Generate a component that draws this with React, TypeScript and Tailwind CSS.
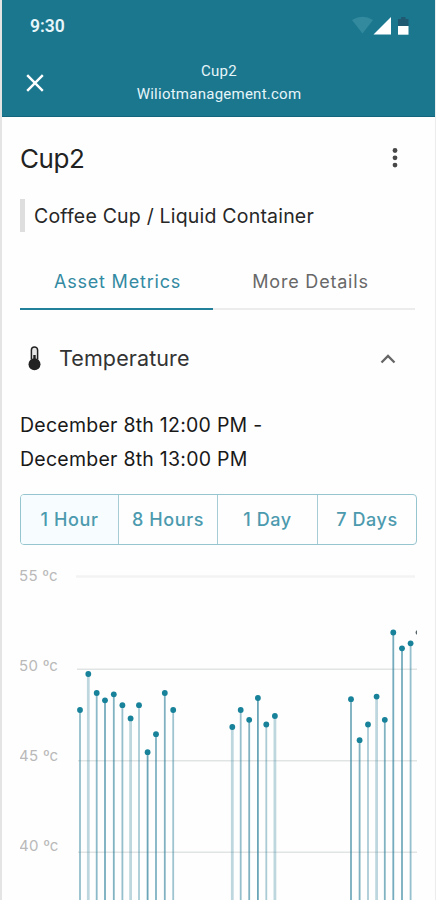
import React from "react";

const points: [number, number, number][] = [
  [80, 710, 0.5], [88.3, 674, 0.3], [96.7, 693, 0.55], [105, 700.3, 0.65], [113.8, 694.3, 0.6],
  [122.4, 705.2, 0.5], [130.6, 718.4, 0.3], [139, 705.2, 0.4], [147.6, 752.2, 0.7], [156, 734.2, 0.6],
  [164.8, 693, 0.6], [173.2, 710, 0.45],
  [232.3, 727, 0.3], [240.7, 710, 0.5], [249.2, 719.8, 0.6], [257.9, 698, 0.7], [266.3, 724.5, 0.4], [274.9, 716, 0.3],
  [351, 699.2, 0.65], [359.6, 740.2, 0.6], [368, 724.5, 0.4], [376.6, 696.6, 0.3], [384.8, 719.8, 0.6],
  [393.3, 632.5, 0.65], [402, 648.3, 0.65], [410.6, 643.3, 0.5],
];
const ranges = ["1 Hour", "8 Hours", "1 Day", "7 Days"];
const degrees = [55, 50, 45, 40];

function StatusIcons() {
  return (
    <svg className="mt-px h-[20px] w-[58px]" viewBox="352 17 58 20">
      <path d="M352 21 Q362.5 14.5 373 21 L362.5 34.5 Z" fill="#338a9e" />
      <path d="M373.5 35.5 L391 18 V35.5 Z" fill="#fff" />
      <path d="M398 20 H401 V18 H405.5 V20 H408.5 V27 H398 Z" fill="#1f5a72" />
      <path d="M398 27 H408.5 V35.7 H398 Z" fill="#fff" />
    </svg>
  );
}

function Header() {
  return (
    <header className="h-[117px] border-b border-[#12657d] bg-[#1b778e] font-['Roboto',sans-serif] text-[#e6f5f9]">
      <div className="flex h-[51px] items-center justify-between pl-[28px] pr-[26px]">
        <span className="text-[17.5px] font-semibold leading-[20px]">9:30</span>
        <StatusIcons />
      </div>
      <div className="grid grid-cols-[24px_1fr_24px] items-center pl-[21px] pr-[21px] pt-[9px]">
        <svg className="h-[24px] w-[24px]" viewBox="0 0 24 24" stroke="#fff" strokeWidth="2.4" fill="none">
          <path d="M4.2 4.2 L19.8 19.8 M19.8 4.2 L4.2 19.8" />
        </svg>
        <div className="text-center text-[15px] leading-[23px] tracking-[0.25px]">
          <div>Cup2</div>
          <div>Wiliotmanagement.com</div>
        </div>
      </div>
    </header>
  );
}

function Chart() {
  return (
    <div className="flex h-[335px] overflow-hidden">
      <div className="-ml-px flex w-[57px] shrink-0 flex-col pt-px text-[15px] leading-[20px] tracking-[0.3px] text-[#b9b9b9]">
        {degrees.map((d) => (
          <span key={d} className="h-[90px] shrink-0 whitespace-nowrap">{d} ºc</span>
        ))}
      </div>
      <svg className="h-[335px] w-[341px] shrink-0" viewBox="76 565 341 335">
        <path d="M76 576.5 H415" stroke="#f3f3f3" strokeWidth="2.5" />
        <path d="M77 669.2 H417 M78 760.8 H417 M78 852.3 H417" stroke="#e1e4e4" strokeWidth="1.5" />
        {points.map(([x, y, strength]) => (
          <g key={x}>
            <path d={`M${x} ${y} V900`} stroke="#2b7f99" strokeWidth={strength < 0.35 ? 2.8 : 1.8} strokeOpacity={strength} />
            <circle cx={x} cy={y} r="2.9" fill="#178299" />
          </g>
        ))}
        <circle cx="418" cy="632.5" r="2.4" fill="#56656a" />
      </svg>
    </div>
  );
}

export default function App() {
  return (
    <div className="h-[900px] w-[436px] overflow-hidden border-l-2 border-r border-l-[#e4e4e4] border-r-[#ececec] bg-[#fefefe] font-['Inter',sans-serif]">
      <div className="-mr-px"><Header /></div>
      <main className="pl-[18px] pr-[18px]">
        <div className="flex h-[82px] items-center justify-between pr-[19px]">
          <h1 className="pt-px text-[26px] leading-[32px] tracking-[-0.4px] text-[#222]">Cup2</h1>
          <svg className="h-[20px] w-[6px]" viewBox="0 0 6 20" fill="#484848">
            <circle cx="3" cy="2.5" r="2.4" /><circle cx="3" cy="9.8" r="2.4" /><circle cx="3" cy="17.1" r="2.4" />
          </svg>
        </div>
        <div className="flex h-[33px] items-center border-l-[5px] border-[#dedede] pl-[9px] pt-[2px] text-[19.5px] text-[#272727]">
          <span className="whitespace-nowrap tracking-[0.2px]">Coffee Cup / Liquid Container</span>
        </div>
        <div className="mt-[20px] flex h-[58px] w-[395px] text-[18px] tracking-[0.8px]">
          <div className="flex w-[193px] items-center justify-center border-b-2 border-[#23809a] pl-[2px] pt-[2px] text-[#338aa2]">Asset Metrics</div>
          <div className="flex flex-1 items-center justify-center border-b-2 border-[#ececec] pr-[7px] pt-[2px] text-[#686868]">More Details</div>
        </div>
        <div className="flex h-[96px] items-center pt-px text-[#333]">
          <svg className="ml-[8px] h-[25px] w-[13px]" viewBox="0 0 13 25">
            <path d="M3.4 13.5 V4 a3.1 3.1 0 0 1 6.2 0 V13.5" fill="#e8e8e8" stroke="#222" strokeWidth="1.5" />
            <circle cx="6.5" cy="18.3" r="6" fill="#222" />
            <path d="M6.5 18 V9" stroke="#222" strokeWidth="2.4" />
          </svg>
          <span className="ml-[18px] text-[21.5px] tracking-[0.1px]">Temperature</span>
          <svg className="ml-auto mr-[21px] h-[10px] w-[16px]" viewBox="0 0 16 10" fill="none" stroke="#666" strokeWidth="2.3">
            <path d="M1.5 8.5 L8 2 L14.5 8.5" />
          </svg>
        </div>
        <div className="h-[88px] pt-[2px] text-[19.5px] leading-[34px] tracking-[0.25px] text-[#191919]">
          <div>December 8th 12:00 PM -</div>
          <div>December 8th 13:00 PM</div>
        </div>
        <div className="grid h-[51px] w-[397px] grid-cols-[98px_99px_100px_1fr] divide-x divide-[#a6cdd6] overflow-hidden rounded-[4px] border border-[#96c4cf] text-[18px] font-medium tracking-[0.6px] text-[#4c9aae]">
          {ranges.map((range, i) => (
            <div key={range} className={`flex items-center justify-center whitespace-nowrap ${i === 0 ? "bg-[#f7fdfe]" : ""}`}>{range}</div>
          ))}
        </div>
        <div className="mt-[20px]"><Chart /></div>
      </main>
    </div>
  );
}
